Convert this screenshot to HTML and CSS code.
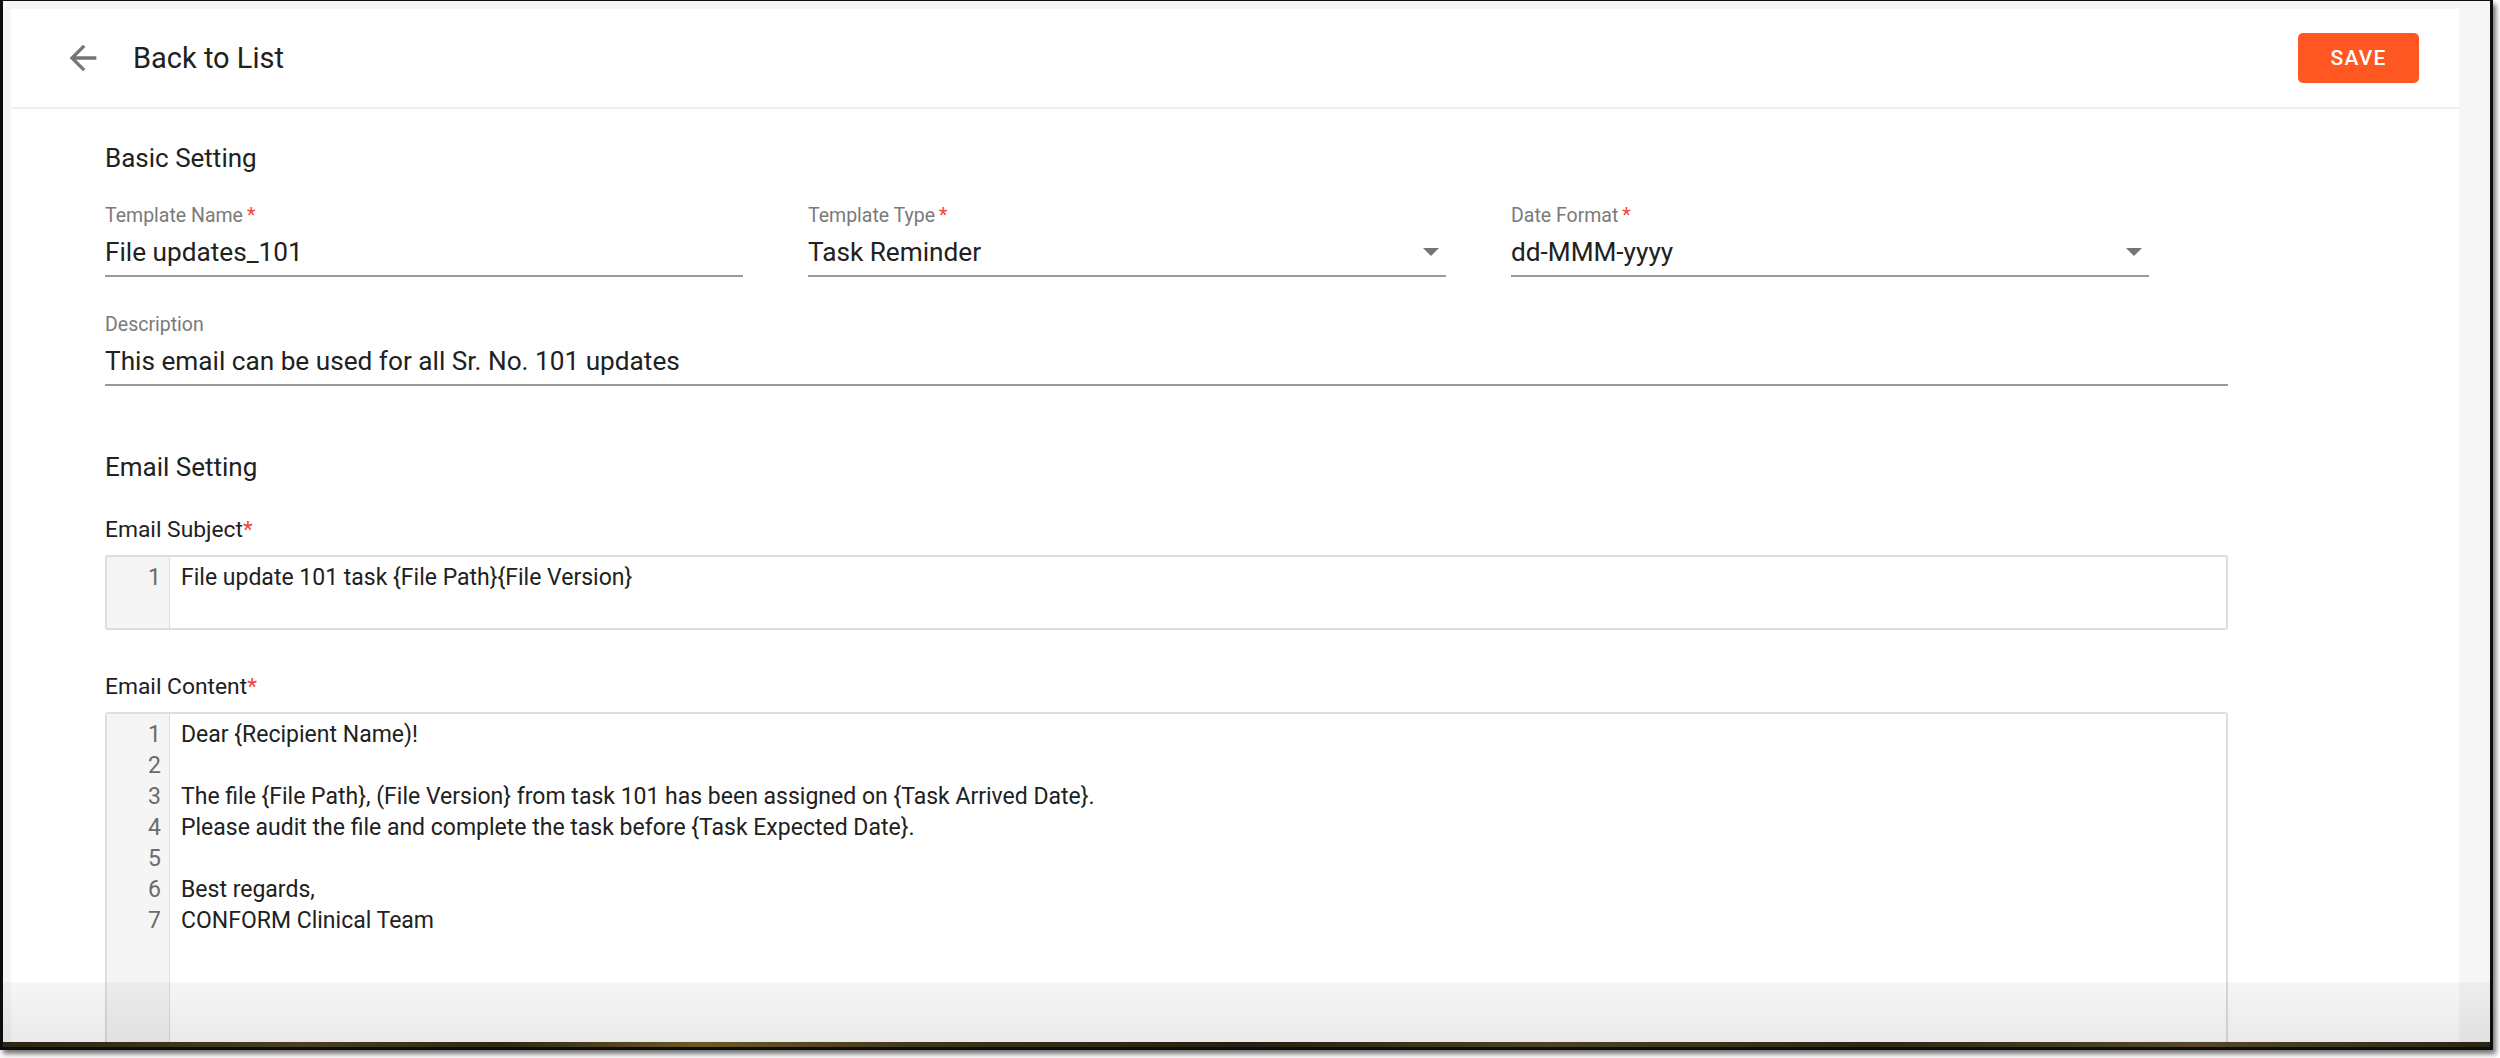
FILE: index.html
```html
<html>
<head>
    <title>Email Template</title>
    <link rel="stylesheet" href="styles.css">
</head>
<body>
    <div class="window">
        <div class="screen">
            <div class="page">
                <header class="topbar">
                    <svg class="back-icon" viewBox="0 0 24 24">
                        <path d="M20 11H7.83l5.59-5.59L12 4l-8 8 8 8 1.41-1.41L7.83 13H20v-2z"/>
                    </svg>
                    <span class="back-text">Back to List</span>
                    <button class="save-btn">SAVE</button>
                </header>

                <main class="content">
                    <h2 class="section-title">Basic Setting</h2>

                    <div class="field-row">
                        <div class="field">
                            <label>Template Name<span class="req">&thinsp;*</span></label>
                            <div class="value">File updates_101</div>
                        </div>
                        <div class="field">
                            <label>Template Type<span class="req">&thinsp;*</span></label>
                            <div class="value select">Task Reminder<span class="caret"></span></div>
                        </div>
                        <div class="field">
                            <label>Date Format<span class="req">&thinsp;*</span></label>
                            <div class="value select">dd-MMM-yyyy<span class="caret"></span></div>
                        </div>
                    </div>

                    <div class="field">
                        <label>Description</label>
                        <div class="value">This email can be used for all Sr. No. 101 updates</div>
                    </div>

                    <h2 class="section-title email-title">Email Setting</h2>

                    <div class="editor-label">Email Subject<span class="req">*</span></div>
                    <div class="editor editor-subject">
                        <div class="gutter">
                            <div class="ln">1</div>
                        </div>
                        <div class="code">
                            <div class="line">File update 101 task {File Path}{File Version}</div>
                        </div>
                    </div>

                    <div class="editor-label content-label">Email Content<span class="req">*</span></div>
                    <div class="editor editor-content">
                        <div class="gutter">
                            <div class="ln">1</div>
                            <div class="ln">2</div>
                            <div class="ln">3</div>
                            <div class="ln">4</div>
                            <div class="ln">5</div>
                            <div class="ln">6</div>
                            <div class="ln">7</div>
                        </div>
                        <div class="code">
                            <div class="line">Dear {Recipient Name)!</div>
                            <div class="line"></div>
                            <div class="line">The file {File Path}, (File Version} from task 101 has been assigned on {Task Arrived Date}.</div>
                            <div class="line">Please audit the file and complete the task before {Task Expected Date}.</div>
                            <div class="line"></div>
                            <div class="line">Best regards,</div>
                            <div class="line">CONFORM Clinical Team</div>
                        </div>
                    </div>
                </main>
            </div>
            <div class="fade"></div>
        </div>
        <div class="wallpaper"></div>
    </div>
</body>
</html>
```

FILE: styles.css
```css
body {
    margin: 0;
    background: #ffffff;
    font-family: Roboto, "Liberation Sans", sans-serif;
    color: #212121;
}

.window {
    width: 2493px;
    height: 1050px;
    box-sizing: border-box;
    border: 3px solid #0d0d0d;
    border-top-width: 1px;
    box-shadow: 3px 4px 5px rgba(0, 0, 0, 0.55);
    display: flex;
    flex-direction: column;
    background: #f5f5f5;
}

.screen {
    flex: 1;
    position: relative;
    overflow: hidden;
    padding: 8px 31px 0 8px;
    background: #f6f6f6;
}

.page {
    background: #ffffff;
    height: 100%;
}

.fade {
    position: absolute;
    left: 0;
    right: 0;
    bottom: 0;
    height: 60px;
    background: linear-gradient(rgba(0, 0, 0, 0.035), rgba(0, 0, 0, 0.085));
}

.wallpaper {
    height: 5px;
    background: linear-gradient(90deg, #2a2416 0%, #4a3f1e 12%, #2e2814 20%, #6b5a26 28%, #3a3219 38%, #241f12 50%, #4d4221 62%, #2b2614 75%, #55482a 88%, #2a2416 100%);
}

/* header */

.topbar {
    height: 98px;
    border-bottom: 2px solid #eeeeee;
    display: flex;
    align-items: center;
    padding: 0 40px 0 52px;
}

.back-icon {
    width: 40px;
    height: 40px;
    fill: #757575;
}

.back-text {
    margin-left: 30px;
    font-size: 29px;
    color: #212121;
    flex: 1;
}

.save-btn {
    width: 121px;
    height: 50px;
    background: #ff5722;
    color: #ffffff;
    border: none;
    border-radius: 5px;
    font-family: inherit;
    font-size: 21px;
    font-weight: 500;
    letter-spacing: 1.2px;
    padding: 0;
}

/* form */

.content {
    padding: 34px 231px 0 94px;
}

.section-title {
    margin: 0 0 31px;
    font-size: 26px;
    line-height: 30px;
    font-weight: 400;
    color: #212121;
}

.email-title {
    margin-top: 66px;
    margin-bottom: 34px;
}

.field-row {
    display: grid;
    grid-template-columns: 638px 638px 638px;
    column-gap: 65px;
    margin-bottom: 36px;
}

.field label {
    display: block;
    font-size: 19.5px;
    line-height: 23px;
    color: #7a7a7a;
    margin-bottom: 10px;
}

.req {
    color: #f44336;
}

.field .value {
    font-size: 26.2px;
    line-height: 30px;
    padding-bottom: 8px;
    border-bottom: 2px solid #9a9a9a;
    color: #212121;
}

.value.select {
    display: flex;
    justify-content: space-between;
    align-items: center;
}

.caret {
    width: 0;
    height: 0;
    border-left: 8px solid transparent;
    border-right: 8px solid transparent;
    border-top: 8px solid #757575;
    margin-right: 7px;
}

/* editors */

.editor-label {
    font-size: 22.8px;
    line-height: 27px;
    color: #212121;
    margin-bottom: 12px;
}

.content-label {
    margin-top: 43px;
}

.editor {
    display: flex;
    border: 2px solid #dedede;
    border-radius: 3px;
    box-sizing: border-box;
    font-size: 23px;
    line-height: 31px;
}

.editor-subject {
    height: 75px;
}

.editor-content {
    height: 420px;
}

.gutter {
    width: 63px;
    background: #f5f5f5;
    border-right: 1px solid #dddddd;
    padding: 5px 8px 0 0;
    box-sizing: border-box;
    text-align: right;
    color: #6b6b6b;
}

.code {
    flex: 1;
    padding: 5px 0 0 11px;
    color: #212121;
}

.line {
    height: 31px;
    white-space: pre;
}
```
